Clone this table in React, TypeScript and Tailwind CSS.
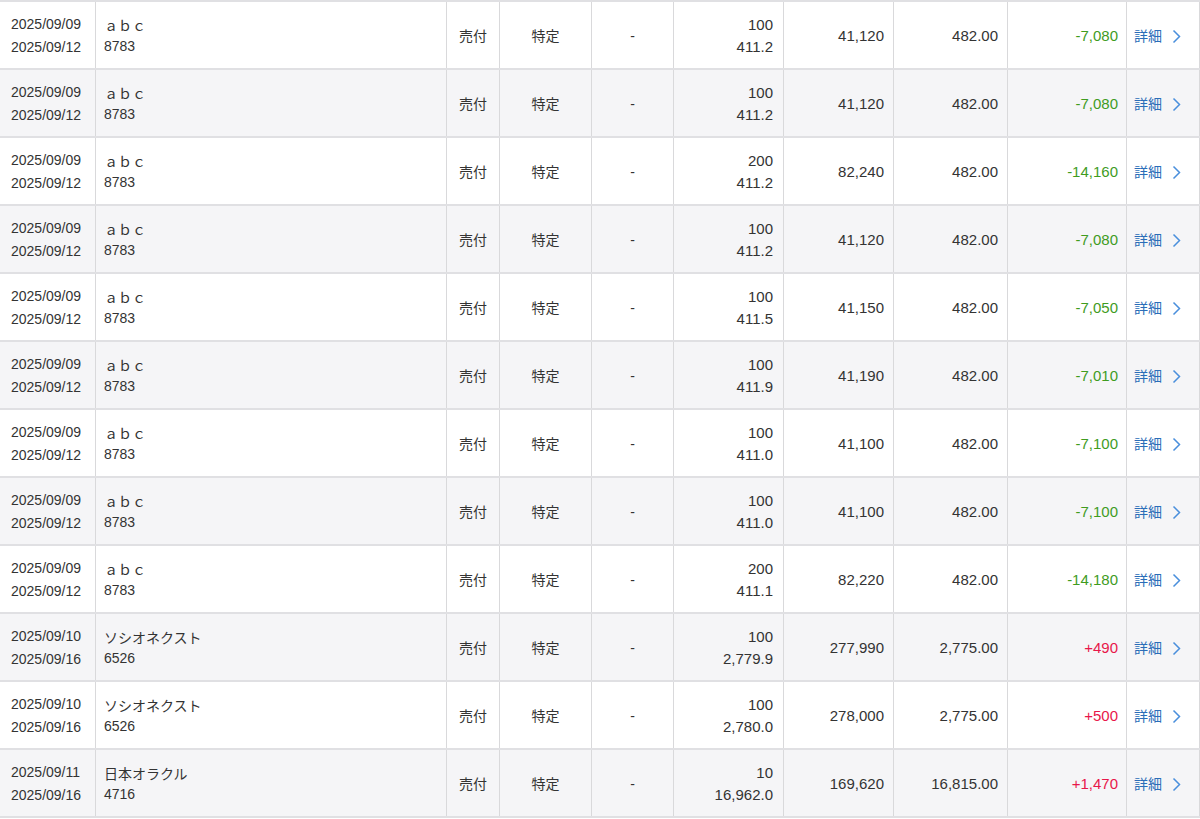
import React from 'react';

type Row = {
    trade: string;
    settle: string;
    name: string;
    code: string;
    qty: string;
    price: string;
    amount: string;
    current: string;
    pl: string;
};

const rows: Row[] = [
    { trade: '2025/09/09', settle: '2025/09/12', name: 'ａｂｃ', code: '8783', qty: '100', price: '411.2', amount: '41,120', current: '482.00', pl: '-7,080' },
    { trade: '2025/09/09', settle: '2025/09/12', name: 'ａｂｃ', code: '8783', qty: '100', price: '411.2', amount: '41,120', current: '482.00', pl: '-7,080' },
    { trade: '2025/09/09', settle: '2025/09/12', name: 'ａｂｃ', code: '8783', qty: '200', price: '411.2', amount: '82,240', current: '482.00', pl: '-14,160' },
    { trade: '2025/09/09', settle: '2025/09/12', name: 'ａｂｃ', code: '8783', qty: '100', price: '411.2', amount: '41,120', current: '482.00', pl: '-7,080' },
    { trade: '2025/09/09', settle: '2025/09/12', name: 'ａｂｃ', code: '8783', qty: '100', price: '411.5', amount: '41,150', current: '482.00', pl: '-7,050' },
    { trade: '2025/09/09', settle: '2025/09/12', name: 'ａｂｃ', code: '8783', qty: '100', price: '411.9', amount: '41,190', current: '482.00', pl: '-7,010' },
    { trade: '2025/09/09', settle: '2025/09/12', name: 'ａｂｃ', code: '8783', qty: '100', price: '411.0', amount: '41,100', current: '482.00', pl: '-7,100' },
    { trade: '2025/09/09', settle: '2025/09/12', name: 'ａｂｃ', code: '8783', qty: '100', price: '411.0', amount: '41,100', current: '482.00', pl: '-7,100' },
    { trade: '2025/09/09', settle: '2025/09/12', name: 'ａｂｃ', code: '8783', qty: '200', price: '411.1', amount: '82,220', current: '482.00', pl: '-14,180' },
    { trade: '2025/09/10', settle: '2025/09/16', name: 'ソシオネクスト', code: '6526', qty: '100', price: '2,779.9', amount: '277,990', current: '2,775.00', pl: '+490' },
    { trade: '2025/09/10', settle: '2025/09/16', name: 'ソシオネクスト', code: '6526', qty: '100', price: '2,780.0', amount: '278,000', current: '2,775.00', pl: '+500' },
    { trade: '2025/09/11', settle: '2025/09/16', name: '日本オラクル', code: '4716', qty: '10', price: '16,962.0', amount: '169,620', current: '16,815.00', pl: '+1,470' },
];

// each cell carries its own right border, so widths include it
const cell = 'h-full border-r border-[#d9d9db] flex flex-col justify-center pt-[2px]';

export default function App() {
    return (
        <div
            className="w-[1200px] h-[819px] overflow-hidden bg-white text-[14px] text-[#333333] border-t-2 border-[#e0e0e3]"
            style={{ fontFamily: '"Liberation Sans", Arial, "Noto Sans CJK JP", sans-serif' }}
        >
            {rows.map((r, i) => (
                <div
                    key={i}
                    className={`flex h-[68px] border-b-2 border-[#e0e0e3] ${i % 2 === 1 ? 'bg-[#f5f5f7]' : 'bg-white'}`}
                >
                    <div className={`${cell} w-[96px] pl-[11px] leading-[23px]`}>
                        <span>{r.trade}</span>
                        <span>{r.settle}</span>
                    </div>
                    <div className={`${cell} w-[351px] pl-[8px] leading-[20px]`}>
                        <span>{r.name}</span>
                        <span>{r.code}</span>
                    </div>
                    <div className={`${cell} w-[53px] items-center`}>売付</div>
                    <div className={`${cell} w-[92px] items-center`}>特定</div>
                    <div className={`${cell} w-[82px] items-center`}>-</div>
                    <div className={`${cell} w-[110px] items-end pr-[10px] text-[15px] leading-[22px]`}>
                        <span>{r.qty}</span>
                        <span>{r.price}</span>
                    </div>
                    <div className={`${cell} w-[110px] items-end pr-[9px] text-[15px]`}>{r.amount}</div>
                    <div className={`${cell} w-[114px] items-end pr-[9px] text-[15px]`}>{r.current}</div>
                    <div className={`${cell} w-[119px] items-end pr-[8px] text-[15px] ${r.pl.startsWith('+') ? 'text-[#e8174a]' : 'text-[#3f9c1f]'}`}>
                        {r.pl}
                    </div>
                    <div className={`${cell} w-[73px] pl-[7px]`}>
                        <span className="flex items-center gap-[10px] text-[#2a6db8]">
                            詳細
                            <svg width="9" height="15" viewBox="0 0 9 15" fill="none">
                                <path d="M1.5 1.5 L7.5 7.5 L1.5 13.5" stroke="#4a8fdc" strokeWidth="1.5" />
                            </svg>
                        </span>
                    </div>
                </div>
            ))}
        </div>
    );
}
